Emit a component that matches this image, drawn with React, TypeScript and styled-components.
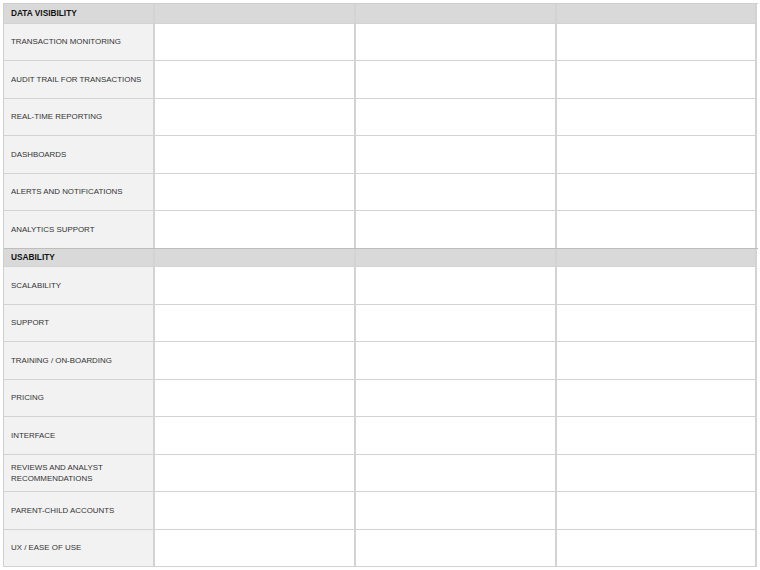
import React from "react";
import styled, { createGlobalStyle } from "styled-components";

const Global = createGlobalStyle`
  html, body { margin: 0; padding: 0; background: #ffffff; }
  body { font-family: "Liberation Sans", Arial, sans-serif; }
`;

const Page = styled.div`
  padding: 3px 0 0 3px;
  width: 757px;
  box-sizing: border-box;
`;

const Table = styled.div`
  width: 754px;
  border-top: 1px solid #cfcfcf;
  border-left: 1px solid #cfcfcf;
  display: flex;
  flex-direction: column;
`;

const Row = styled.div<{ $section?: boolean; $first?: boolean }>`
  display: grid;
  grid-template-columns: 151px 201px 201px 200px;
  height: ${(p) => (p.$section ? "19.6px" : "37.5px")};
  box-sizing: border-box;
  border-top: ${(p) => (p.$section && !p.$first ? "1px solid #bdbdbd" : "none")};
  margin-top: ${(p) => (p.$section && !p.$first ? "-1px" : "0")};
`;

const Cell = styled.div<{ $kind: "head" | "label" | "data" }>`
  box-sizing: border-box;
  border-right: 2px solid #d3d3d3;
  border-bottom: 1.5px solid #d3d3d3;
  background: ${(p) =>
    p.$kind === "head" ? "#d9d9d9" : p.$kind === "label" ? "#f2f2f2" : "#ffffff"};
  display: flex;
  align-items: center;
  padding: 0 6px 0 7px;
  font-size: ${(p) => (p.$kind === "head" ? "8.3px" : "7.9px")};
  font-weight: ${(p) => (p.$kind === "head" ? 700 : 400)};
  color: ${(p) => (p.$kind === "head" ? "#111111" : "#333333")};
  line-height: 11px;
`;

const sections: { title: string; items: string[] }[] = [
  {
    title: "DATA VISIBILITY",
    items: [
      "TRANSACTION MONITORING",
      "AUDIT TRAIL FOR TRANSACTIONS",
      "REAL-TIME REPORTING",
      "DASHBOARDS",
      "ALERTS AND NOTIFICATIONS",
      "ANALYTICS SUPPORT",
    ],
  },
  {
    title: "USABILITY",
    items: [
      "SCALABILITY",
      "SUPPORT",
      "TRAINING / ON-BOARDING",
      "PRICING",
      "INTERFACE",
      "REVIEWS AND ANALYST RECOMMENDATIONS",
      "PARENT-CHILD ACCOUNTS",
      "UX / EASE OF USE",
    ],
  },
];

export default function App() {
  return (
    <Page>
      <Global />
      <Table>
        {sections.map((s, si) => (
          <React.Fragment key={s.title}>
            <Row $section $first={si === 0}>
              <Cell $kind="head">{s.title}</Cell>
              <Cell $kind="head" />
              <Cell $kind="head" />
              <Cell $kind="head" />
            </Row>
            {s.items.map((it) => (
              <Row key={it}>
                <Cell $kind="label">{it}</Cell>
                <Cell $kind="data" />
                <Cell $kind="data" />
                <Cell $kind="data" />
              </Row>
            ))}
          </React.Fragment>
        ))}
      </Table>
    </Page>
  );
}
